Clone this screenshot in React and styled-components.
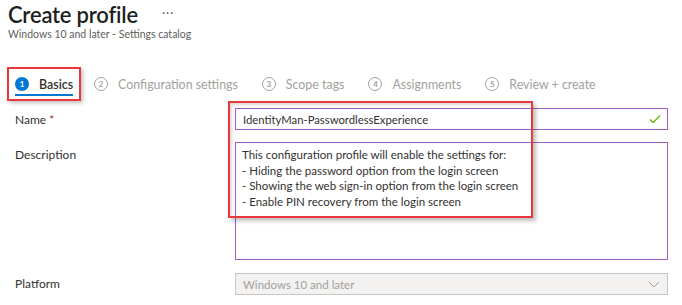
import React from 'react';
import styled, { createGlobalStyle } from 'styled-components';

const GlobalStyle = createGlobalStyle`
  body {
    margin: 0;
    background: #ffffff;
    font-family: "Segoe UI", Lato, "Noto Sans", sans-serif;
    color: #323130;
  }
`

const Page = styled.div`
  width: 682px;
  height: 305px;
  padding-left: 8px;
  box-sizing: border-box;
  overflow: hidden;
`

const TitleRow = styled.div`
  display: flex;
  align-items: center;
  gap: 24px;
  height: 28px;
`

const Title = styled.h1`
  margin: 0;
  font-size: 22px;
  font-weight: 600;
  color: #201f1e;
  letter-spacing: -0.2px;
`

const MoreDots = styled.span`
  font-size: 12px;
  color: #605e5c;
  letter-spacing: 1px;
  margin-top: -4px;
`

const Subtitle = styled.div`
  font-size: 10.5px;
  color: #605e5c;
`

const TabBar = styled.div`
  display: flex;
  align-items: center;
  gap: 24px;
  margin-top: 27px;
  height: 34px;
`

const Tab = styled.div`
  position: relative;
  display: flex;
  align-items: center;
  gap: 10px;
  height: 100%;
  box-sizing: border-box;
  padding: ${p => (p.$active ? '0 6px' : '0')};
  border: ${p => (p.$active ? '2px solid #e8383d' : 'none')};
  box-shadow: ${p => (p.$active ? '2px 2px 4px rgba(0,0,0,0.25)' : 'none')};
  margin-left: ${p => (p.$active ? '-1px' : '0')};
  margin-right: ${p => (p.$active ? '-11px' : '0')};
`

const StepCircle = styled.span`
  width: 14px;
  height: 14px;
  border-radius: 50%;
  box-sizing: border-box;
  display: flex;
  align-items: center;
  justify-content: center;
  font-size: 8px;
  font-weight: 700;
  background: ${p => (p.$active ? '#0078d4' : 'transparent')};
  color: ${p => (p.$active ? '#ffffff' : '#a19f9d')};
  border: ${p => (p.$active ? 'none' : '1px solid #a19f9d')};
`

const TabLabel = styled.span`
  font-size: 12.4px;
  font-weight: ${p => (p.$active ? 600 : 400)};
  color: ${p => (p.$active ? '#323130' : '#a19f9d')};
`

const Underline = styled.span`
  position: absolute;
  left: 6px;
  right: 6px;
  bottom: 3px;
  height: 2px;
  background: #0078d4;
`

const Form = styled.div`
  position: relative;
  display: grid;
  grid-template-columns: 220px 433px;
  row-gap: 12px;
  padding-left: 7px;
  margin-top: 7px;
`

const Label = styled.div`
  font-size: 12px;
  color: #323130;
  padding-top: ${p => p.$top || '0'};
  align-self: ${p => (p.$center ? 'center' : 'start')};
`

const Required = styled.span`
  color: #a4262c;
  margin-left: 3px;
`

const InputBox = styled.div`
  display: flex;
  align-items: center;
  justify-content: space-between;
  height: 20px;
  border: 1px solid #a35dc4;
  padding: 0 6px 0 7px;
  font-size: 11.3px;
  color: #323130;
`

const TextArea = styled.div`
  height: 118px;
  border: 1px solid #a35dc4;
  box-sizing: border-box;
  padding: 4px 6px;
  font-size: 11.5px;
  line-height: 15.5px;
  color: #323130;
`

const Select = styled.div`
  display: flex;
  align-items: center;
  justify-content: space-between;
  height: 22px;
  box-sizing: border-box;
  margin-top: 1px;
  border: 1px solid #c8c6c4;
  background: #f3f2f1;
  padding: 0 7px;
  font-size: 11.5px;
  color: #a19f9d;
`

const Callout = styled.div`
  position: absolute;
  left: 220px;
  top: -7px;
  width: 305px;
  height: 117px;
  box-sizing: border-box;
  border: 2px solid #e8383d;
  box-shadow: 3px 3px 4px rgba(0,0,0,0.25), inset 2px 2px 3px rgba(0,0,0,0.15);
  pointer-events: none;
`

const steps = ['Basics', 'Configuration settings', 'Scope tags', 'Assignments', 'Review + create'];

function Check() {
  return (
    <svg width="12" height="10" viewBox="0 0 12 10" fill="none">
      <path d="M1 5.5 L4.2 8.5 L11 1.5" stroke="#6bb700" strokeWidth="1.3" />
    </svg>
  );
}

function Chevron() {
  return (
    <svg width="12" height="7" viewBox="0 0 12 7" fill="none">
      <path d="M1 1 L6 6 L11 1" stroke="#a19f9d" strokeWidth="1" />
    </svg>
  );
}

export default function App() {
  return (
    <Page>
      <GlobalStyle />
      <TitleRow>
        <Title>Create profile</Title>
        <MoreDots>···</MoreDots>
      </TitleRow>
      <Subtitle>Windows 10 and later - Settings catalog</Subtitle>

      <TabBar>
        {steps.map((s, i) => (
          <Tab key={s} $active={i === 0}>
            <StepCircle $active={i === 0}>{i + 1}</StepCircle>
            <TabLabel $active={i === 0}>{s}</TabLabel>
            {i === 0 && <Underline />}
          </Tab>
        ))}
      </TabBar>

      <Form>
        <Label $center>Name<Required>*</Required></Label>
        <InputBox>
          <span>IdentityMan-PasswordlessExperience</span>
          <Check />
        </InputBox>

        <Label $top="5px">Description</Label>
        <TextArea>
          This configuration profile will enable the settings for:<br />
          - Hiding the password option from the login screen<br />
          - Showing the web sign-in option from the login screen<br />
          - Enable PIN recovery from the login screen
        </TextArea>

        <Label $center>Platform</Label>
        <Select>
          <span>Windows 10 and later</span>
          <Chevron />
        </Select>

        <Callout />
      </Form>
    </Page>
  );
}
